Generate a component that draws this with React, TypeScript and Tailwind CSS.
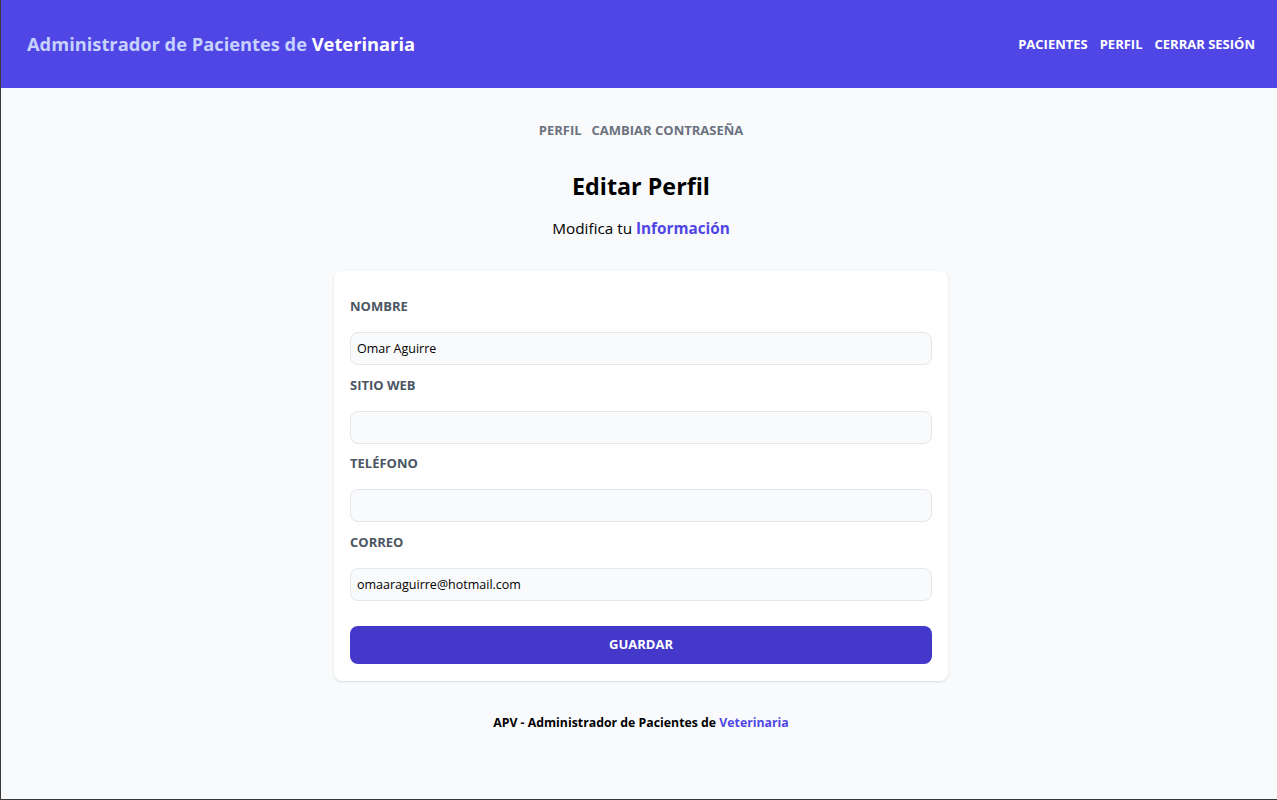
import React from "react"

const fields = [
  { label: "Nombre", value: "Omar Aguirre" },
  { label: "Sitio Web", value: "" },
  { label: "Teléfono", value: "" },
  { label: "Correo", value: "omaaraguirre@hotmail.com" },
]

const App = () => {
  return (
    <div className="h-screen flex flex-col bg-[#f9fafb] border-l border-b border-[#3a3a3a] font-['Open_Sans',sans-serif]">
      <header className="h-[88px] shrink-0 bg-[#4f46e5] flex items-center justify-between pl-[26px] pr-[22px]">
        <h1 className="text-[18.3px] font-bold text-[#c7d2fe]">
          Administrador de Pacientes de <span className="text-white">Veterinaria</span>
        </h1>
        <nav className="flex gap-3 pt-px text-[13px] font-bold uppercase text-white">
          <a href="#">Pacientes</a>
          <a href="#">Perfil</a>
          <button type="button" className="uppercase font-bold">Cerrar Sesión</button>
        </nav>
      </header>

      <main className="flex-1 flex flex-col items-center pl-1">
        <nav className="mt-8 flex gap-2.5 text-[13px] leading-5 font-bold uppercase text-[#6b7280]">
          <a href="#">Perfil</a>
          <a href="#">Cambiar Contraseña</a>
        </nav>

        <h2 className="mt-[30px] h-8 leading-8 text-[23.3px] font-bold text-black">Editar Perfil</h2>
        <p className="mt-[14px] h-6 leading-6 text-[15.3px] text-black">
          Modifica tu <span className="font-bold text-[#4f46e5]">Información</span>
        </p>

        <form className="mt-[31px] w-[614px] bg-white rounded-lg shadow px-4 pt-[25px] pb-[17px]">
          {fields.map((f, i) => (
            <div key={f.label} className={i === 0 ? "" : "mt-[9.5px]"}>
              <label className="block h-5 leading-5 text-[13px] font-bold uppercase text-[#4b5563]">{f.label}</label>
              <input
                type="text"
                defaultValue={f.value}
                className="mt-4 w-full h-[33px] px-1.5 text-[12.5px] text-black bg-[#f9fafb] border border-[#e5e7eb] rounded-lg focus:outline-none"
              />
            </div>
          ))}
          <button
            type="submit"
            className="mt-[25px] w-full h-[38px] rounded-lg bg-[#4338ca] text-white text-[13px] font-bold uppercase"
          >
            Guardar
          </button>
        </form>

        <p className="mt-[32px] h-5 leading-5 text-[12.3px] font-bold text-black">
          APV - Administrador de Pacientes de <span className="text-[#4f46e5]">Veterinaria</span>
        </p>
      </main>
    </div>
  )
}

export default App
